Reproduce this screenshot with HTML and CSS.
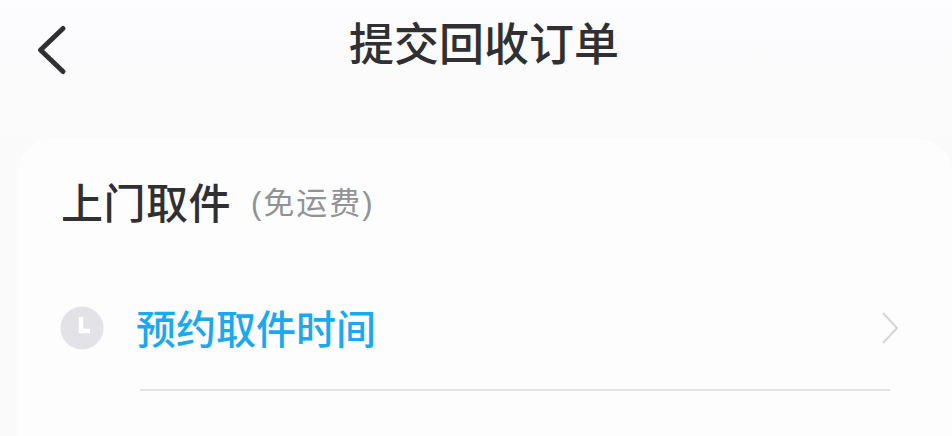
FILE: index.html
```html
<!DOCTYPE html>
<html lang="zh-CN">
<head>
    <meta charset="UTF-8">
    <title>提交回收订单</title>
    <link rel="stylesheet" href="styles.css">
</head>
<body>
    <header class="topbar">
        <button class="back" type="button" aria-label="返回">
            <svg width="34" height="54" viewBox="0 0 34 54">
                <path d="M28 5.500 L5.500 27 L28 48.500" fill="none" stroke="#303034" stroke-width="5" stroke-linecap="round" stroke-linejoin="round"/>
            </svg>
        </button>
        <h1>提交回收订单</h1>
    </header>
    <main class="card">
        <div class="card-title">
            <span class="card-name">上门取件</span>
            <span class="card-note">(免运费)</span>
        </div>
        <div class="row">
            <svg class="clock" width="44" height="44" viewBox="0 0 44 44">
                <circle cx="22" cy="22" r="21.5" fill="#e3e3e7"/>
                <path d="M21 11 V25 H30" fill="none" stroke="#fff" stroke-width="4.5"/>
            </svg>
            <span class="row-label">预约取件时间</span>
            <svg class="chevron" width="18" height="32" viewBox="0 0 18 32">
                <path d="M2 1 L16 16 L2 31" fill="none" stroke="#d6d6da" stroke-width="2"/>
            </svg>
        </div>
        <div class="divider"></div>
    </main>
</body>
</html>
```

FILE: styles.css
```css
html, body {
    height: 100%;
}
body {
    margin: 0;
    overflow: hidden;
    background: linear-gradient(#fdfcfe, #fafafa 140px);
    font-family: "Liberation Sans", "Noto Sans CJK SC", sans-serif;
}
.topbar {
    position: relative;
    height: 139px;
    box-sizing: border-box;
    padding: 19px 0 0 16px;
}
.topbar h1 {
    margin: 0;
    text-align: center;
    font-size: 45px;
    line-height: 54px;
    font-weight: 500;
    color: #303033;
}
.back {
    position: absolute;
    left: 35px;
    top: 23px;
    padding: 0;
    border: none;
    background: none;
}
.back svg {
    display: block;
}
.card {
    height: 297px;
    margin-left: 18px;
    box-sizing: border-box;
    padding-top: 33px;
    background: #fefdfe;
    border-radius: 34px 34px 0 0;
}
.card-title {
    display: flex;
    align-items: center;
    height: 56px;
    padding-left: 43px;
}
.card-name {
    font-size: 42px;
    font-weight: 500;
    letter-spacing: 0.5px;
    color: #303033;
}
.card-note {
    font-size: 31px;
    letter-spacing: 2px;
    color: #929295;
    margin-left: 20px;
}
.row {
    display: flex;
    align-items: center;
    height: 60px;
    margin-top: 70px;
    padding-left: 42px;
}
.row-label {
    margin: 0 0 3px 32px;
    font-size: 40px;
    font-weight: 500;
    color: #1aa9ee;
}
.chevron {
    margin-left: auto;
    margin-right: 53px;
}
.divider {
    height: 2px;
    margin: 31px 62px 0 122px;
    background: #e4e3e6;
}
```
